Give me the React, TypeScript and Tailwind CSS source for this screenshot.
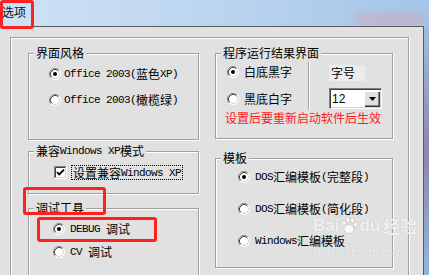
import type { ReactNode } from 'react';

const CJK = "font-['Noto_Sans_CJK_SC',sans-serif] text-[12px]";
const MONO = "font-['Liberation_Mono',monospace] text-[11px] tracking-[-0.6px]";

// ASCII runs get the half-width mono face, everything else the CJK face
function Txt({ s }: { s: string }) {
  const parts = s.split(/([\x20-\x7E]+)/).filter(Boolean);
  return (
    <>
      {parts.map((p, i) =>
        /^[\x20-\x7E]+$/.test(p) ? (
          <span key={i} className={MONO}>{p}</span>
        ) : (
          <span key={i} className={CJK}>{p}</span>
        )
      )}
    </>
  );
}

function Radio({ on }: { on?: boolean }) {
  return (
    <svg width="12" height="12" viewBox="0 0 12 12" className="shrink-0">
      <circle cx="6" cy="6" r="5.5" fill="#fff" />
      <path d="M2.11 9.89 A5.5 5.5 0 0 1 9.89 2.11" fill="none" stroke="#808080" />
      <path d="M9.89 2.11 A5.5 5.5 0 0 1 2.11 9.89" fill="none" stroke="#ffffff" />
      <path d="M2.82 9.18 A4.5 4.5 0 0 1 9.18 2.82" fill="none" stroke="#404040" />
      <path d="M9.18 2.82 A4.5 4.5 0 0 1 2.82 9.18" fill="none" stroke="#d4d0c8" />
      {on && <circle cx="6" cy="6" r="2" fill="#000" />}
    </svg>
  );
}

function Check() {
  return (
    <svg width="13" height="13" viewBox="0 0 13 13" className="shrink-0">
      <rect x="0" y="0" width="13" height="13" fill="#fff" />
      <path d="M0.5 12.5 V0.5 H12.5" fill="none" stroke="#808080" />
      <path d="M1.5 11.5 V1.5 H11.5" fill="none" stroke="#404040" />
      <path d="M0.5 12.5 H12.5 V0.5" fill="none" stroke="#ffffff" />
      <path d="M1.5 11.5 H11.5 V1.5" fill="none" stroke="#d4d0c8" />
      <path d="M3 6 L5.2 8.4 L10 3.6" fill="none" stroke="#000" strokeWidth="1.8" />
    </svg>
  );
}

function Group({ title, className, children }: { title: string; className: string; children?: ReactNode }) {
  return (
    <div className={`relative border border-[#a0a0a0] shadow-[inset_1px_1px_0_#fff,1px_1px_0_#fff] ${className}`}>
      <div className="absolute left-[5px] top-[-9px] h-[16px] px-[2px] bg-[#e1e1e1] flex items-center whitespace-pre">
        <Txt s={title} />
      </div>
      {children}
    </div>
  );
}

function Row({ s, on, gap }: { s: string; on?: boolean; gap: string }) {
  return (
    <div className={`h-[16px] flex items-center whitespace-pre ${gap}`}>
      <Radio on={on} />
      <div className="flex items-center">
        <Txt s={s} />
      </div>
    </div>
  );
}

export default function App() {
  return (
    <div className="relative w-[429px] h-[275px] overflow-hidden flex flex-col bg-[#e1e1e1] text-black leading-[16px] font-['Noto_Sans_CJK_SC',sans-serif]">
      {/* Title bar */}
      <div className="relative h-[26px] shrink-0 bg-gradient-to-r from-[#cfe2f5] via-[#bcd5ef] to-[#a3c5e9] overflow-hidden">
        <div className="absolute left-[355px] top-[14px] w-[70px] h-[10px] rounded-full bg-[#d9a0ae] opacity-60 blur-[4px]" />
        <div className="pl-[2px] pt-[4px] text-[12px] leading-[16px] text-[#111]">选项</div>
      </div>

      <div className="flex flex-1 min-h-0">
        {/* Dialog */}
        <div className="w-[424px] shrink-0 border-t border-r border-[#5a5a5a] bg-[#e1e1e1] pl-[10px] pt-[10px] overflow-hidden">
          <div className="w-[399px] h-[300px] border border-[#a0a0a0] shadow-[inset_1px_1px_0_#fff,1px_1px_0_#fff] pl-[17px] pt-[15px]">
            <div className="grid grid-cols-[171px_178px] gap-x-[16px]">
              {/* Left column */}
              <div className="flex flex-col">
                <Group title="界面风格" className="h-[87px]">
                  <div className="flex flex-col gap-[10px] pt-[12px] pl-[20px]">
                    <Row s="Office 2003(蓝色XP)" on gap="gap-[3px]" />
                    <Row s="Office 2003(橄榄绿)" gap="gap-[3px]" />
                  </div>
                </Group>

                <Group title="兼容Windows XP模式" className="mt-[11px] h-[43px]">
                  <div className="pt-[13px] pl-[25px] flex items-center gap-[4px]">
                    <Check />
                    <div className="h-[15px] border border-dotted border-black px-[1px] flex items-center whitespace-pre">
                      <Txt s="设置兼容Windows XP" />
                    </div>
                  </div>
                </Group>

                <Group title="调试工具" className="mt-[14px] h-[80px]">
                  <div className="flex flex-col gap-[7px] pt-[12px] pl-[24px]">
                    <Row s="DEBUG 调试" on gap="gap-[5px]" />
                    <Row s="CV 调试" gap="gap-[5px]" />
                  </div>
                </Group>
              </div>

              {/* Right column */}
              <div className="flex flex-col">
                <Group title="程序运行结果界面" className="h-[86px]">
                  <div className="flex pt-[8px] h-[56px]">
                    <div className="w-[92px] pl-[11px] pt-[2px] flex flex-col gap-[11px]">
                      <Row s="白底黑字" on gap="gap-[5px]" />
                      <Row s="黑底白字" gap="gap-[5px]" />
                    </div>
                    <div className="w-[2px] h-[48px] border-l border-[#a0a0a0] bg-white" />
                    <div className="ml-[19px] pt-[3px] flex flex-col gap-[7px]">
                      <div className="w-[36px] h-[16px] bg-[#ececec] pl-[2px] text-[12px]">字号</div>
                      <div className="w-[53px] h-[21px] bg-white border border-t-[#808080] border-l-[#808080] border-b-white border-r-white shadow-[inset_1px_1px_0_#404040,inset_-1px_-1px_0_#d4d0c8] flex items-center">
                        <div className="flex-1 pl-[2px] text-[12px] font-['Liberation_Sans',sans-serif]">12</div>
                        <div className="w-[16px] h-[16px] mr-[1px] bg-[#e1e1e1] shadow-[inset_1px_1px_0_#fff,inset_-1px_-1px_0_#404040,inset_-2px_-2px_0_#808080] flex items-center justify-center">
                          <svg width="7" height="4" viewBox="0 0 7 4">
                            <path d="M0 0 H7 L3.5 4 Z" fill="#000" />
                          </svg>
                        </div>
                      </div>
                    </div>
                  </div>
                  <div className="pl-[9px] text-[12px] text-[#ff1a1a]">设置后要重新启动软件后生效</div>
                </Group>

                <Group title="模板" className="mt-[19px] h-[110px]">
                  <div className="flex flex-col gap-[16px] pt-[10px] pl-[22px]">
                    <Row s="DOS汇编模板(完整段)" on gap="gap-[5px]" />
                    <Row s="DOS汇编模板(简化段)" gap="gap-[5px]" />
                    <Row s="Windows汇编模板" gap="gap-[5px]" />
                  </div>
                </Group>
              </div>
            </div>
          </div>
        </div>

        {/* Blurred desktop behind the dialog */}
        <div className="flex-1 bg-gradient-to-b from-[#9fbfe3] via-[#8d86ad] to-[#92b6df]" />
      </div>

      {/* Annotation boxes */}
      <div className="absolute left-0 top-0 w-[34px] h-[29px] border-[3px] border-[#ff2020] rounded-[3px]" />
      <div className="absolute left-[23px] top-[187px] w-[83px] h-[28px] border-[3px] border-[#ff2020] rounded-[3px]" />
      <div className="absolute left-[37px] top-[217px] w-[120px] h-[25px] border-[3px] border-[#ff2020] rounded-[3px]" />

      {/* Watermark */}
      <div className="absolute left-[313px] top-[216px] flex items-center text-white/80 [text-shadow:0_0_1px_#b0b0b0] font-['Liberation_Sans',sans-serif] font-bold">
        <span className="text-[17px] leading-[20px]">Bai</span>
        <svg width="20" height="20" viewBox="0 0 20 20" className="opacity-80">
          <ellipse cx="10" cy="13" rx="5" ry="4.5" fill="#fff" stroke="#b8b8b8" strokeWidth="0.6" />
          <ellipse cx="5" cy="7" rx="2" ry="2.6" fill="#fff" stroke="#b8b8b8" strokeWidth="0.6" />
          <ellipse cx="9" cy="4" rx="2" ry="2.6" fill="#fff" stroke="#b8b8b8" strokeWidth="0.6" />
          <ellipse cx="13.5" cy="4.5" rx="2" ry="2.6" fill="#fff" stroke="#b8b8b8" strokeWidth="0.6" />
          <ellipse cx="16.5" cy="8.5" rx="2" ry="2.6" fill="#fff" stroke="#b8b8b8" strokeWidth="0.6" />
        </svg>
        <span className="text-[17px] leading-[20px]">du</span>
        <span className="ml-[3px] text-[17px] leading-[20px] font-['Noto_Sans_CJK_SC',sans-serif]">经验</span>
      </div>
      <div className="absolute left-[313px] top-[245px] text-[11px] leading-[14px] text-white/80 [text-shadow:0_0_1px_#b0b0b0] font-['Liberation_Sans',sans-serif]">
        jingyan.baidu.com
      </div>
    </div>
  );
}
